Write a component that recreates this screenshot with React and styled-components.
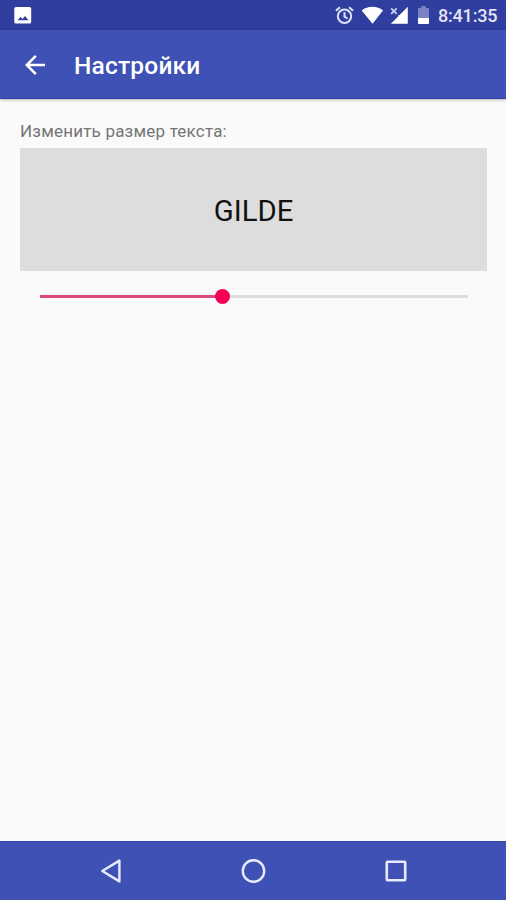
import React from 'react';
import styled, { createGlobalStyle } from 'styled-components';

const GlobalStyle = createGlobalStyle`
	* {
		box-sizing: border-box;
	}

	body {
		margin: 0;
		background-color: #fafafa;
		font-family: Roboto, 'Liberation Sans', sans-serif;
	}

	svg {
		display: block;
		flex: none;
		overflow: visible;
	}
`;

const Screen = styled.div`
	height: 900px;
	display: flex;
	flex-direction: column;
	overflow: hidden;
`;

// System status bar
const StatusBar = styled.div`
	height: 30px;
	display: flex;
	justify-content: space-between;
	padding: 0 9px 0 14px;
	background-color: #303e9f;
	color: #ffffff;
`;

const StatusGroup = styled.div`
	display: flex;
	align-items: center;
`;

const StatusIcon = styled.svg`
	margin-right: ${props => props.$gap || 0}px;
`;

const Clock = styled.div`
	width: 59px;
	padding-top: 2px;
	font-weight: 500;
	font-size: 18px;
	line-height: 28px;
	letter-spacing: -0.2px;
	white-space: nowrap;
	color: #e3e5f4;
`;

// Toolbar
const Toolbar = styled.header`
	height: 69px;
	display: flex;
	align-items: center;
	gap: 28px;
	padding: 2px 25px 0;
	background-color: #3f51b5;
	border-bottom: 1px solid #3247a5;
	box-shadow: 0 1px 3px rgba(0, 0, 0, 0.28);
	color: #ffffff;
`;

const BackButton = styled.button`
	width: 21px;
	padding: 0;
	border: 0;
	background: none;
	color: inherit;
`;

const Title = styled.h1`
	margin: 0;
	padding-top: 2px;
	font-weight: 500;
	font-size: 24.5px;
	line-height: 32px;
	letter-spacing: 0.2px;
`;

// Settings
const Content = styled.main`
	flex: 1;
	padding: 21px 19px 0 20px;
`;

const Label = styled.div`
	height: 28px;
	font-size: 17px;
	line-height: 22px;
	letter-spacing: 0.2px;
	color: #757575;
`;

const Preview = styled.div`
	height: 123px;
	display: flex;
	align-items: center;
	justify-content: center;
	padding-top: 2px;
	background-color: #dddddd;
	font-size: 29.3px;
	color: #111111;
`;

const Slider = styled.div`
	height: 50px;
	display: flex;
	align-items: center;
	padding: 0 19px 0 20px;
`;

const Track = styled.div`
	flex: ${props => props.$size};
	height: 3px;
	background-color: ${props => (props.$active ? '#d84a80' : '#dddddd')};
`;

const Thumb = styled.div`
	width: 15px;
	height: 15px;
	margin: 0 -7.5px;
	border-radius: 50%;
	background-color: #f50057;
	z-index: 1;
`;

// System navigation
const NavBar = styled.nav`
	height: 59px;
	display: flex;
	align-items: center;
	justify-content: center;
	gap: 118px;
	background-color: #3f51b5;
	border-top: 1px solid #3448a4;
`;

const value = 42.7;

const ImageIcon = () => (
	<StatusIcon width="18" height="18" viewBox="0 0 18 18">
		<path
			fill="currentColor"
			fillRule="evenodd"
			d="M2 .9h13.5a1.7 1.7 0 0 1 1.7 1.7v13.3a1.7 1.7 0 0 1-1.7 1.7H2a1.7 1.7 0 0 1-1.7-1.7V2.6A1.7 1.7 0 0 1 2 .9ZM3.6 14.2h10.8l-3.3-4.3-2.7 3.1-1.8-2.2Z"
		/>
	</StatusIcon>
);

const AlarmIcon = () => (
	<StatusIcon $gap={7} width="20" height="20" viewBox="0 0 20 20" fill="none" stroke="#dfe4fb" strokeWidth="2">
		<circle cx="10.5" cy="11.3" r="6.7" />
		<path d="M10.5 7.3v4.4l3 1.8M1.9 5.8 5.9 2.3M19.1 5.8 15.1 2.3" />
	</StatusIcon>
);

const WifiIcon = () => (
	<StatusIcon $gap={7} width="22" height="18" viewBox="0 0 22 18">
		<path fill="currentColor" d="M11.5 17.8.7 4.4C3.7 2.1 7.4.8 11.5.8S19 2.1 22 4.4Z" />
	</StatusIcon>
);

const SignalIcon = () => (
	<StatusIcon $gap={10} width="18" height="18" viewBox="0 0 18 18">
		<path fill="currentColor" d="M17.8.8v17H.8l7.6-7.6V9h1.2Z" />
		<path stroke="#cbd3f4" strokeWidth="1.7" d="m1.2 2.3 5.5 5.5M6.7 2.3 1.2 7.8" />
	</StatusIcon>
);

const BatteryIcon = () => (
	<StatusIcon $gap={9} width="11" height="18" viewBox="0 0 11 18">
		<path fill="#7982c2" d="M3.3 0h4.4v2H10a1 1 0 0 1 1 1v9H0V3a1 1 0 0 1 1-1h2.3Z" />
		<path fill="currentColor" d="M0 12h11v5a1 1 0 0 1-1 1H1a1 1 0 0 1-1-1Z" />
	</StatusIcon>
);

const App = () => (
	<>
		<GlobalStyle />
		<Screen>
			<StatusBar>
				<StatusGroup>
					<ImageIcon />
				</StatusGroup>
				<StatusGroup>
					<AlarmIcon />
					<WifiIcon />
					<SignalIcon />
					<BatteryIcon />
					<Clock>8:41:35</Clock>
				</StatusGroup>
			</StatusBar>
			<Toolbar>
				<BackButton>
					<svg width="21" height="20" viewBox="0 0 21 20" fill="none" stroke="currentColor" strokeWidth="2.5">
						<path d="M20 10H2.2M10.8.9 1.8 10l9 9.1" />
					</svg>
				</BackButton>
				<Title>Настройки</Title>
			</Toolbar>
			<Content>
				<Label>Изменить размер текста:</Label>
				<Preview>GILDE</Preview>
				<Slider>
					<Track $active $size={value} />
					<Thumb />
					<Track $size={100 - value} />
				</Slider>
			</Content>
			<NavBar>
				<svg width="24" height="24" viewBox="0 0 24 24" fill="none" stroke="#e6ebff" strokeWidth="2.4">
					<path strokeLinejoin="round" d="M20.4 1.6v20.8L3.3 12Z" />
				</svg>
				<svg width="24" height="24" viewBox="0 0 24 24" fill="none" stroke="#e6ebff" strokeWidth="2.4">
					<circle cx="12.5" cy="12" r="10.7" />
				</svg>
				<svg width="24" height="24" viewBox="0 0 24 24" fill="none" stroke="#e6ebff" strokeWidth="2.6">
					<rect x="3.8" y="2.8" width="18.4" height="18.4" rx="0.8" />
				</svg>
			</NavBar>
		</Screen>
	</>
);

export default App;
